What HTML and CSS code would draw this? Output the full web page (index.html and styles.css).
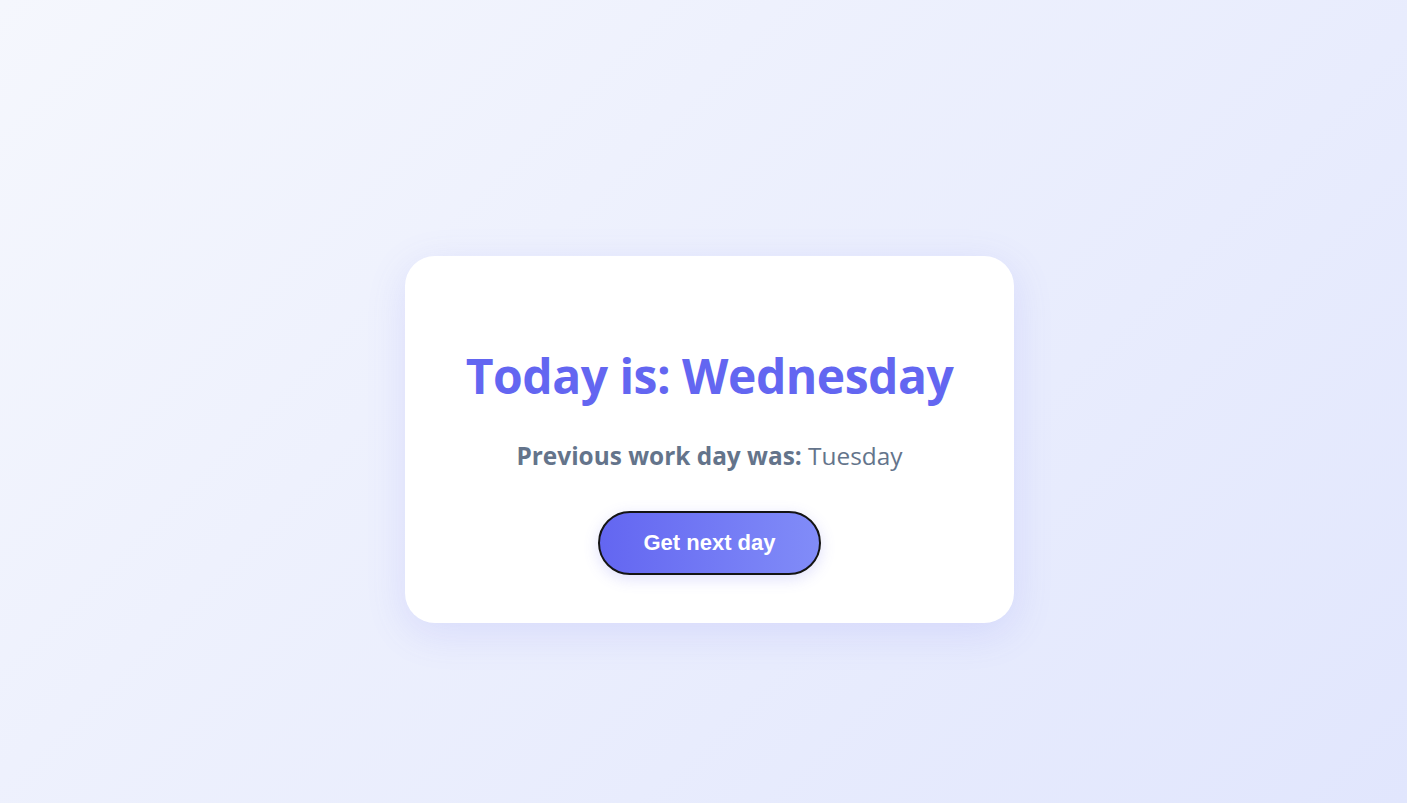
FILE: index.html
```html
<!DOCTYPE html>
<html lang="en">
<head>
<meta charset="utf-8">
<title>Work day</title>
<link rel="stylesheet" href="styles.css">
</head>
<body>
<main class="page">
  <section class="card">
    <h1 class="title">Today is: Wednesday</h1>
    <p class="previous"><strong>Previous work day was:</strong> Tuesday</p>
    <button class="next-btn" type="button">Get next day</button>
  </section>
</main>
</body>
</html>
```
FILE: styles.css
```css
* { box-sizing: border-box; }
html, body { margin: 0; padding: 0; }
body {
  min-height: 100vh;
  background: linear-gradient(135deg, #f5f7fd 0%, #e1e6fd 100%);
  font-family: "Open Sans", "Noto Sans", sans-serif;
}
.page {
  min-height: 100vh;
  display: flex;
  align-items: center;
  justify-content: center;
  padding: 76px 0 0 12px;
}
.card {
  width: 609px;
  height: 367px;
  background: #ffffff;
  border-radius: 30px;
  box-shadow: 0 10px 40px rgba(99, 102, 241, 0.14);
  display: flex;
  flex-direction: column;
  align-items: center;
  padding: 88px 40px 48px;
}
.title {
  margin: 0;
  font-size: 48px;
  line-height: 64px;
  font-weight: 700;
  color: #6366f1;
  letter-spacing: -0.5px;
}
.previous {
  margin: 32px 0 0;
  font-size: 24.4px;
  line-height: 32px;
  color: #64748b;
}
.previous strong { font-weight: 700; }
.next-btn {
  margin-top: 39px;
  width: 223px;
  height: 64px;
  flex-shrink: 0;
  border: 2px solid #141414;
  border-radius: 32px;
  background: linear-gradient(90deg, #6366f1 0%, #818cf8 100%);
  color: #ffffff;
  font-family: "Liberation Sans", Arial, sans-serif;
  font-weight: 700;
  font-size: 22px;
  box-shadow: 0 4px 15px rgba(99, 102, 241, 0.2);
  cursor: pointer;
}
```
